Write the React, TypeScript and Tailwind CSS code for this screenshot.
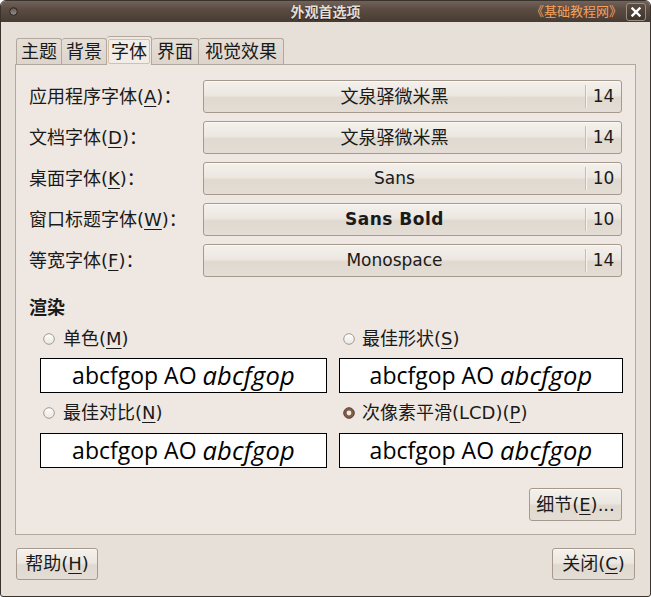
import React from "react";

const UI = "font-['DejaVu_Sans','Noto_Sans_CJK_SC',sans-serif]";
const BTN =
  "border border-[#a69a8e] rounded-[3px] bg-[linear-gradient(to_bottom,#f4f0eb_0%,#ece7e1_46%,#e0d9d0_54%,#e4ddd5_100%)] shadow-[inset_0_1px_0_#fbf9f6]";
const TAB =
  "h-[26px] border border-b-0 border-[#b3a89d] rounded-t-[3px] bg-[linear-gradient(to_bottom,#e6dfd7,#ddd5cc)] flex items-center";

function U({ children }: { children: React.ReactNode }) {
  return <span className="underline decoration-1 underline-offset-[3px]">{children}</span>;
}

function Radio({ checked }: { checked?: boolean }) {
  if (checked) {
    return (
      <svg width="12" height="12" viewBox="0 0 12 12" className="shrink-0">
        <circle cx="6" cy="6" r="5.3" fill="#7e5d48" stroke="#5b4333" strokeWidth="1" />
        <circle cx="6" cy="6" r="2.4" fill="#f2e8de" />
      </svg>
    );
  }
  return (
    <svg width="12" height="12" viewBox="0 0 12 12" className="shrink-0">
      <defs>
        <linearGradient id="rgu" x1="0" y1="0" x2="0" y2="1">
          <stop offset="0" stopColor="#ffffff" />
          <stop offset="1" stopColor="#ebe6e1" />
        </linearGradient>
      </defs>
      <circle cx="6" cy="6" r="5.3" fill="url(#rgu)" stroke="#a39990" strokeWidth="1" />
    </svg>
  );
}

const rows = [
  { label: "应用程序字体", k: "A", value: "文泉驿微米黑", size: "14", bold: false, latin: false },
  { label: "文档字体", k: "D", value: "文泉驿微米黑", size: "14", bold: false, latin: false },
  { label: "桌面字体", k: "K", value: "Sans", size: "10", bold: false, latin: true },
  { label: "窗口标题字体", k: "W", value: "Sans Bold", size: "10", bold: true, latin: true },
  { label: "等宽字体", k: "F", value: "Monospace", size: "14", bold: false, latin: true },
];

function Preview() {
  return (
    <div className="h-[35px] bg-white border border-black flex items-center justify-center font-['Open_Sans',sans-serif] text-black leading-none whitespace-pre">
      <span className="text-[23px]">abcfgop AO </span>
      <span className="italic text-[25.5px] tracking-[0.2px]">abcfgop</span>
    </div>
  );
}

export default function App() {
  return (
    <div
      className={`${UI} w-[651px] h-[597px] bg-[#e6e0d9] border border-[#3a322c] rounded-t-[6px] rounded-b-[3px] overflow-hidden flex flex-col text-[#1a1a1a]`}
    >
      {/* Title bar */}
      <div className="h-[21px] shrink-0 grid grid-cols-[1fr_auto_1fr] items-center bg-[linear-gradient(to_bottom,#71625a_0%,#5b4c43_40%,#473b33_100%)]">
        <div className="pl-[8px] flex items-center">
          <svg width="9" height="9" viewBox="0 0 9 9">
            <defs>
              <linearGradient id="tb" x1="0" y1="0" x2="0" y2="1">
                <stop offset="0" stopColor="#5d5550" />
                <stop offset="1" stopColor="#9a928b" />
              </linearGradient>
            </defs>
            <circle cx="4.5" cy="4.5" r="3.8" fill="url(#tb)" stroke="#2b2420" strokeWidth="1" />
          </svg>
        </div>
        <div className="text-[14px] font-bold text-[#e2ddd5] [text-shadow:0_1px_1px_#1e1814] leading-none">
          外观首选项
        </div>
        <div className="flex items-center justify-end pr-[4px] gap-[4px]">
          <span className="text-[13px] text-[#f5a15a] leading-none">《基础教程网》</span>
          <div className="w-[20px] h-[18px] rounded-[3px] border border-[#9b8f85] bg-[linear-gradient(to_bottom,#5a4c42,#3f342c)] flex items-center justify-center">
            <svg width="10" height="10" viewBox="0 0 10 10">
              <path d="M1.5 1.5 L8.5 8.5 M8.5 1.5 L1.5 8.5" stroke="#ffffff" strokeWidth="2.4" strokeLinecap="square" />
            </svg>
          </div>
        </div>
      </div>

      {/* Body */}
      <div className="flex-1 flex flex-col px-[14px] pt-[14px]">
        {/* Tabs */}
        <div className="flex items-end h-[28px] pl-px text-[18px] leading-none">
          <div className={`${TAB} px-[4px]`}>主题</div>
          <div className={`${TAB} px-[4px] border-l-0`}>背景</div>
          <div className="relative z-10 -mb-px h-[29px] px-px pt-[2px] border border-b-0 border-l-0 border-[#b3a89d] rounded-t-[3px] bg-[#efe8e2] flex items-start">
            <span className="h-[25px] px-[2px] border border-[#d9bea6] rounded-[2px] flex items-center bg-[#f3ede8]">
              字体
            </span>
          </div>
          <div className={`${TAB} px-[5px] border-l-0`}>界面</div>
          <div className={`${TAB} px-[6px] border-l-0`}>视觉效果</div>
        </div>

        {/* Panel */}
        <div className="border border-[#b3a89d] bg-[#efe8e2] px-[13px] pt-[15px] pb-[13px] flex flex-col">
          <div className="grid grid-cols-[174px_1fr] gap-y-[8px] items-center">
            {rows.map((r) => (
              <React.Fragment key={r.k}>
                <div className="text-[18px] leading-none">
                  {r.label}(<U>{r.k}</U>)：
                </div>
                <div className={`${BTN} h-[33px] flex items-center`}>
                  <div
                    className={`flex-1 text-center leading-none ${
                      r.latin ? "text-[17px]" : "text-[18px]"
                    } ${r.bold ? "font-bold tracking-[0.5px]" : ""}`}
                  >
                    {r.value}
                  </div>
                  <div className="w-px h-[23px] bg-[#c6bcb2] shadow-[1px_0_0_#f6f2ee]" />
                  <div className="w-[35px] text-center text-[17px] leading-none">{r.size}</div>
                </div>
              </React.Fragment>
            ))}
          </div>

          <div className="mt-[20px] h-[22px] flex items-center text-[18px] font-bold leading-none">渲染</div>

          <div className="ml-[11px] mr-[-1px] mt-[8px] grid grid-cols-[287px_1fr] gap-x-[12px]">
            <div className="flex flex-col">
              <div className="h-[24px] flex items-center gap-[8px] pl-[3px] text-[18px] leading-none">
                <Radio />
                <span>
                  单色(<U>M</U>)
                </span>
              </div>
              <div className="mt-[7px]">
                <Preview />
              </div>
              <div className="mt-[8px] h-[24px] flex items-center gap-[8px] pl-[3px] text-[18px] leading-none">
                <Radio />
                <span>
                  最佳对比(<U>N</U>)
                </span>
              </div>
              <div className="mt-[8px]">
                <Preview />
              </div>
            </div>
            <div className="flex flex-col">
              <div className="h-[24px] flex items-center gap-[7px] pl-[4px] text-[18px] leading-none">
                <Radio />
                <span>
                  最佳形状(<U>S</U>)
                </span>
              </div>
              <div className="mt-[7px]">
                <Preview />
              </div>
              <div className="mt-[8px] h-[24px] flex items-center gap-[7px] pl-[4px] text-[18px] leading-none">
                <Radio checked />
                <span>
                  次像素平滑(LCD)(<U>P</U>)
                </span>
              </div>
              <div className="mt-[8px]">
                <Preview />
              </div>
            </div>
          </div>

          <div className="mt-[20px] flex justify-end">
            <div className={`${BTN} w-[93px] h-[33px] flex items-center justify-center text-[18px] leading-none`}>
              细节(<U>E</U>)...
            </div>
          </div>
        </div>

        {/* Bottom buttons */}
        <div className="mt-[13px] flex justify-between px-px">
          <div className={`${BTN} w-[82px] h-[32px] flex items-center justify-center text-[18px] leading-none`}>
            帮助(<U>H</U>)
          </div>
          <div className={`${BTN} w-[83px] h-[32px] flex items-center justify-center text-[18px] leading-none`}>
            关闭(<U>C</U>)
          </div>
        </div>
      </div>
    </div>
  );
}
